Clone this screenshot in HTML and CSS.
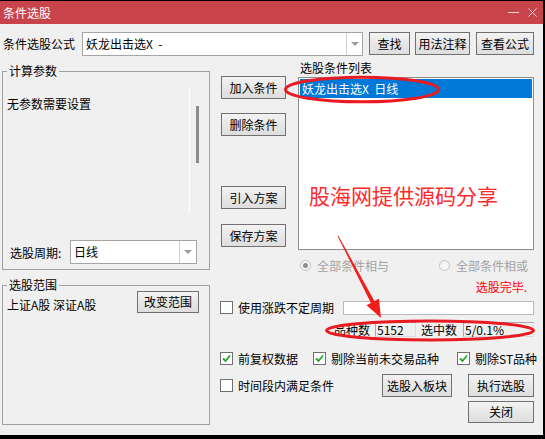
FILE: index.html
```html
<!DOCTYPE html>
<html lang="zh-CN">
<head>
    <meta charset="UTF-8">
    <title>条件选股</title>
    <link rel="stylesheet" href="styles.css">
</head>
<body>
    <div class="window">
        <div class="titlebar">
            <span class="title">条件选股</span>
            <div class="title-btns">
                <svg class="tb-min" width="11" height="11" viewBox="0 0 11 11"><line x1="0" y1="5.5" x2="11" y2="5.5" stroke="#f6dcdd" stroke-width="1"/></svg>
                <svg class="tb-close" width="9" height="9" viewBox="0 0 9 9"><path d="M0.5 0.5L8.5 8.5M8.5 0.5L0.5 8.5" stroke="#f6dcdd" stroke-width="1" fill="none"/></svg>
            </div>
        </div>

        <div class="formula-row">
            <span class="formula-label">条件选股公式</span>
            <div class="combo formula-combo">
                <span class="combo-text">妖龙出击选X  -</span>
                <span class="combo-btn"><i class="arrow"></i></span>
            </div>
            <button class="btn btn-find">查找</button>
            <button class="btn btn-usage">用法注释</button>
            <button class="btn btn-view">查看公式</button>
        </div>

        <div class="main">
            <div class="left-col">
                <fieldset class="group group-params">
                    <legend>计算参数</legend>
                    <div class="params">
                        <div class="params-text">无参数需要设置</div>
                        <div class="params-scroll"><div class="thumb"></div></div>
                    </div>
                    <div class="period-row">
                        <span class="period-label">选股周期:</span>
                        <div class="combo period-combo">
                            <span class="combo-text">日线</span>
                            <span class="combo-btn"><i class="arrow"></i></span>
                        </div>
                    </div>
                </fieldset>
                <fieldset class="group group-range">
                    <legend>选股范围</legend>
                    <div class="range-row">
                        <span class="range-text">上证A股 深证A股</span>
                        <button class="btn btn-range">改变范围</button>
                    </div>
                </fieldset>
            </div>

            <div class="right-col">
                <div class="upper">
                    <div class="side-btns">
                        <button class="btn btn-add">加入条件</button>
                        <button class="btn btn-del">删除条件</button>
                        <button class="btn btn-import">引入方案</button>
                        <button class="btn btn-save">保存方案</button>
                    </div>
                    <div class="cond">
                        <div class="cond-label">选股条件列表</div>
                        <div class="cond-list">
                            <div class="cond-item selected">妖龙出击选X  日线</div>
                        </div>
                        <div class="radio-row">
                            <span class="radio checked"><i class="radio-dot"></i>全部条件相与</span>
                            <span class="radio"><i class="radio-dot"></i>全部条件相或</span>
                        </div>
                        <div class="status">选股完毕.</div>
                    </div>
                </div>

                <div class="options">
                    <div class="opt-row row-period">
                        <span class="check"><i class="cb"></i>使用涨跌不定周期</span>
                        <span class="edit"></span>
                    </div>
                    <div class="opt-row row-stats">
                        <span>品种数</span>
                        <span class="field f-count">5152</span>
                        <span class="stat-label">选中数</span>
                        <span class="field f-hit">5/0.1%</span>
                    </div>
                    <div class="opt-row row-flags">
                        <span class="check"><i class="cb"><svg width="11" height="11" viewBox="0 0 11 11"><polyline points="2,5.5 4.5,8 9,2.5" fill="none" stroke="#23a12b" stroke-width="1.8"/></svg></i>前复权数据</span>
                        <span class="check flag-2"><i class="cb"><svg width="11" height="11" viewBox="0 0 11 11"><polyline points="2,5.5 4.5,8 9,2.5" fill="none" stroke="#23a12b" stroke-width="1.8"/></svg></i>剔除当前未交易品种</span>
                        <span class="check flag-3"><i class="cb"><svg width="11" height="11" viewBox="0 0 11 11"><polyline points="2,5.5 4.5,8 9,2.5" fill="none" stroke="#23a12b" stroke-width="1.8"/></svg></i>剔除ST品种</span>
                    </div>
                    <div class="opt-row row-actions">
                        <span class="check"><i class="cb"></i>时间段内满足条件</span>
                        <button class="btn btn-to-block">选股入板块</button>
                        <button class="btn btn-run">执行选股</button>
                    </div>
                    <div class="opt-row row-close">
                        <button class="btn btn-close">关闭</button>
                    </div>
                </div>
            </div>
        </div>
    </div>

    <!-- 标注 -->
    <div class="watermark">股海网提供源码分享</div>
    <svg class="annotations" width="545" height="439" viewBox="0 0 545 439">
        <ellipse cx="362" cy="89.5" rx="76.5" ry="12.3" fill="none" stroke="#ea1a22" stroke-width="3"/>
        <ellipse cx="430" cy="330.5" rx="103.5" ry="9.5" fill="none" stroke="#ea1a22" stroke-width="3"/>
        <polygon points="338.4,235.8 374.4,301.1 378.9,298.8 381,318 366.5,305.3 370.9,303 337.6,236.2" fill="#f51c1c"/>
    </svg>
</body>
</html>
```

FILE: styles.css
```css
* {
    box-sizing: border-box;
}
body {
    margin: 0;
    padding-top: 1px;
    width: 545px;
    height: 439px;
    background: #000;
    position: relative;
    overflow: hidden;
    font-family: "Noto Sans CJK SC", "Microsoft YaHei", sans-serif;
    font-size: 12px;
    color: #000;
}
.window {
    width: 543px;
    height: 434px;
    background: #f0f0f0;
}
.titlebar {
    height: 23px;
    background: #c9434a;
    color: #fff;
    display: flex;
    align-items: center;
    padding: 0 6px 0 3px;
    line-height: 16px;
}
.title-btns {
    margin-left: auto;
    display: flex;
    align-items: center;
    gap: 9px;
}
.tb-min, .tb-close {
    display: block;
}

/* 按钮 */
.btn {
    font: inherit;
    color: #000;
    padding: 0;
    height: 23px;
    line-height: 20px;
    border: 1px solid #707070;
    background: linear-gradient(#f3f3f3, #e6e6e6 55%, #dedede);
    text-align: center;
    white-space: nowrap;
}

/* 下拉框 */
.combo {
    display: flex;
    height: 24px;
    background: #fff;
    border: 1px solid #a5a5a5;
}
.combo-text {
    flex: 1;
    padding-left: 3px;
    line-height: 22px;
    white-space: pre;
}
.combo-btn {
    width: 16px;
    border-left: 1px solid #cfcfcf;
    display: flex;
    align-items: center;
    justify-content: center;
}
.arrow {
    width: 0;
    height: 0;
    border-left: 4px solid transparent;
    border-right: 4px solid transparent;
    border-top: 4px solid #9c9c9c;
}

.formula-row {
    display: flex;
    align-items: flex-start;
    height: 24px;
    margin-top: 8px;
    padding-left: 3px;
}
.formula-label {
    width: 79px;
    line-height: 24px;
}
.formula-combo {
    width: 281px;
}
.btn-find {
    width: 41px;
    margin-left: 6px;
}
.btn-usage {
    width: 55px;
    margin-left: 5px;
}
.btn-view {
    width: 58px;
    margin-left: 6px;
}

.main {
    display: flex;
    height: 369px;
    padding-left: 2px;
}
.left-col {
    width: 208px;
    display: flex;
    flex-direction: column;
}

/* 分组框 */
.group {
    margin: 0;
    min-width: 0;
    border: 1px solid #a0a0a0;
    padding: 9px 4px 5px;
}
.group legend {
    padding: 0 2px;
    line-height: 16px;
}
.group-params {
    margin-top: 7px;
}
.params {
    display: flex;
    width: 192px;
    height: 125px;
}
.params-text {
    flex: 1;
    border-right: 1px solid #fff;
    padding-top: 8px;
    line-height: 16px;
}
.params-scroll {
    width: 9px;
}
.thumb {
    margin: 18px 0 0 6px;
    width: 3px;
    height: 57px;
    background: #8c8c8c;
}
.period-row {
    display: flex;
    align-items: center;
    height: 24px;
    margin-top: 27px;
}
.period-label {
    width: 63px;
    padding-left: 3px;
}
.period-combo {
    width: 127px;
}
.period-combo .combo-btn {
    width: 17px;
}
.group-range {
    margin-top: 7px;
    flex: 1;
    padding: 0 4px;
}
.range-row {
    display: flex;
    align-items: flex-end;
    margin-top: -2px;
}
.range-text {
    width: 130px;
    line-height: 16px;
}
.btn-range {
    width: 62px;
    height: 22px;
}

/* 右侧 */
.right-col {
    width: 314px;
    margin-left: 10px;
    display: flex;
    flex-direction: column;
}
.upper {
    display: grid;
    grid-template-columns: 66px 236px;
    column-gap: 12px;
}
.side-btns {
    display: flex;
    flex-direction: column;
    align-items: flex-end;
}
.side-btns .btn {
    width: 65px;
}
.btn-add {
    margin-top: 20px;
}
.btn-del {
    margin-top: 14px;
}
.btn-import {
    margin-top: 50px;
}
.btn-save {
    margin-top: 15px;
}
.cond-label {
    margin-top: 5px;
    line-height: 14px;
    padding-left: 2px;
}
.cond-list {
    margin-top: 2px;
    height: 173px;
    border: 1px solid #8c8c8c;
    background: #fff;
    padding: 1px;
}
.cond-item {
    height: 19px;
    line-height: 19px;
    padding-left: 2px;
    white-space: pre;
}
.cond-item.selected {
    background: #0078d7;
    color: #fff;
}
.radio-row {
    display: flex;
    align-items: center;
    height: 16px;
    margin-top: 7px;
    padding: 0 6px 0 2px;
    color: #a3a3a3;
}
.radio {
    display: flex;
    align-items: center;
    gap: 6px;
}
.radio + .radio {
    margin-left: auto;
}
.radio-dot {
    width: 11px;
    height: 11px;
    border-radius: 50%;
    border: 1px solid #c2c2c2;
    background: #f6f6f6;
    display: flex;
    align-items: center;
    justify-content: center;
}
.radio.checked .radio-dot::after {
    content: "";
    width: 5px;
    height: 5px;
    border-radius: 50%;
    background: #8e8e8e;
}
.status {
    margin-top: 6px;
    line-height: 16px;
    text-align: right;
    padding-right: 7px;
    color: #f00;
}

.opt-row {
    display: flex;
    align-items: center;
}
.check {
    display: flex;
    align-items: center;
    gap: 5px;
    line-height: 15px;
    white-space: nowrap;
}
.cb {
    width: 13px;
    height: 13px;
    border: 1px solid #707070;
    background: #fff;
    display: flex;
    align-items: center;
    justify-content: center;
}
.cb svg {
    display: block;
}
.row-period {
    margin-top: 5px;
    height: 15px;
}
.edit {
    margin-left: auto;
    width: 191px;
    height: 14px;
    border: 1px solid #b9b9b9;
    background: #fff;
}
.row-stats {
    margin-top: 7px;
    height: 15px;
    justify-content: flex-end;
}
.field {
    height: 15px;
    line-height: 13px;
    padding-left: 1px;
    border: 1px solid;
    border-color: #a9a9a9 #dcdcdc #dcdcdc #a9a9a9;
    background: #f0f0f0;
}
.f-count {
    width: 41px;
    margin-left: 5px;
}
.stat-label {
    margin-left: 5px;
}
.f-hit {
    width: 71px;
    margin-left: 6px;
}
.row-flags {
    margin-top: 15px;
    height: 13px;
}
.flag-2 {
    margin-left: 15px;
}
.flag-3 {
    margin-left: 18px;
}
.row-actions {
    margin-top: 9px;
    height: 23px;
}
.btn-to-block {
    margin-left: auto;
    width: 70px;
}
.btn-run {
    margin-left: 16px;
    width: 66px;
}
.row-close {
    margin-top: 4px;
    justify-content: flex-end;
}
.btn-close {
    width: 66px;
    height: 22px;
}

/* 标注层 */
.watermark {
    position: absolute;
    left: 309px;
    top: 182px;
    font-size: 21px;
    line-height: 26px;
    color: #ff2a2a;
    white-space: nowrap;
}
.annotations {
    position: absolute;
    left: 0;
    top: 0;
    pointer-events: none;
}
```
